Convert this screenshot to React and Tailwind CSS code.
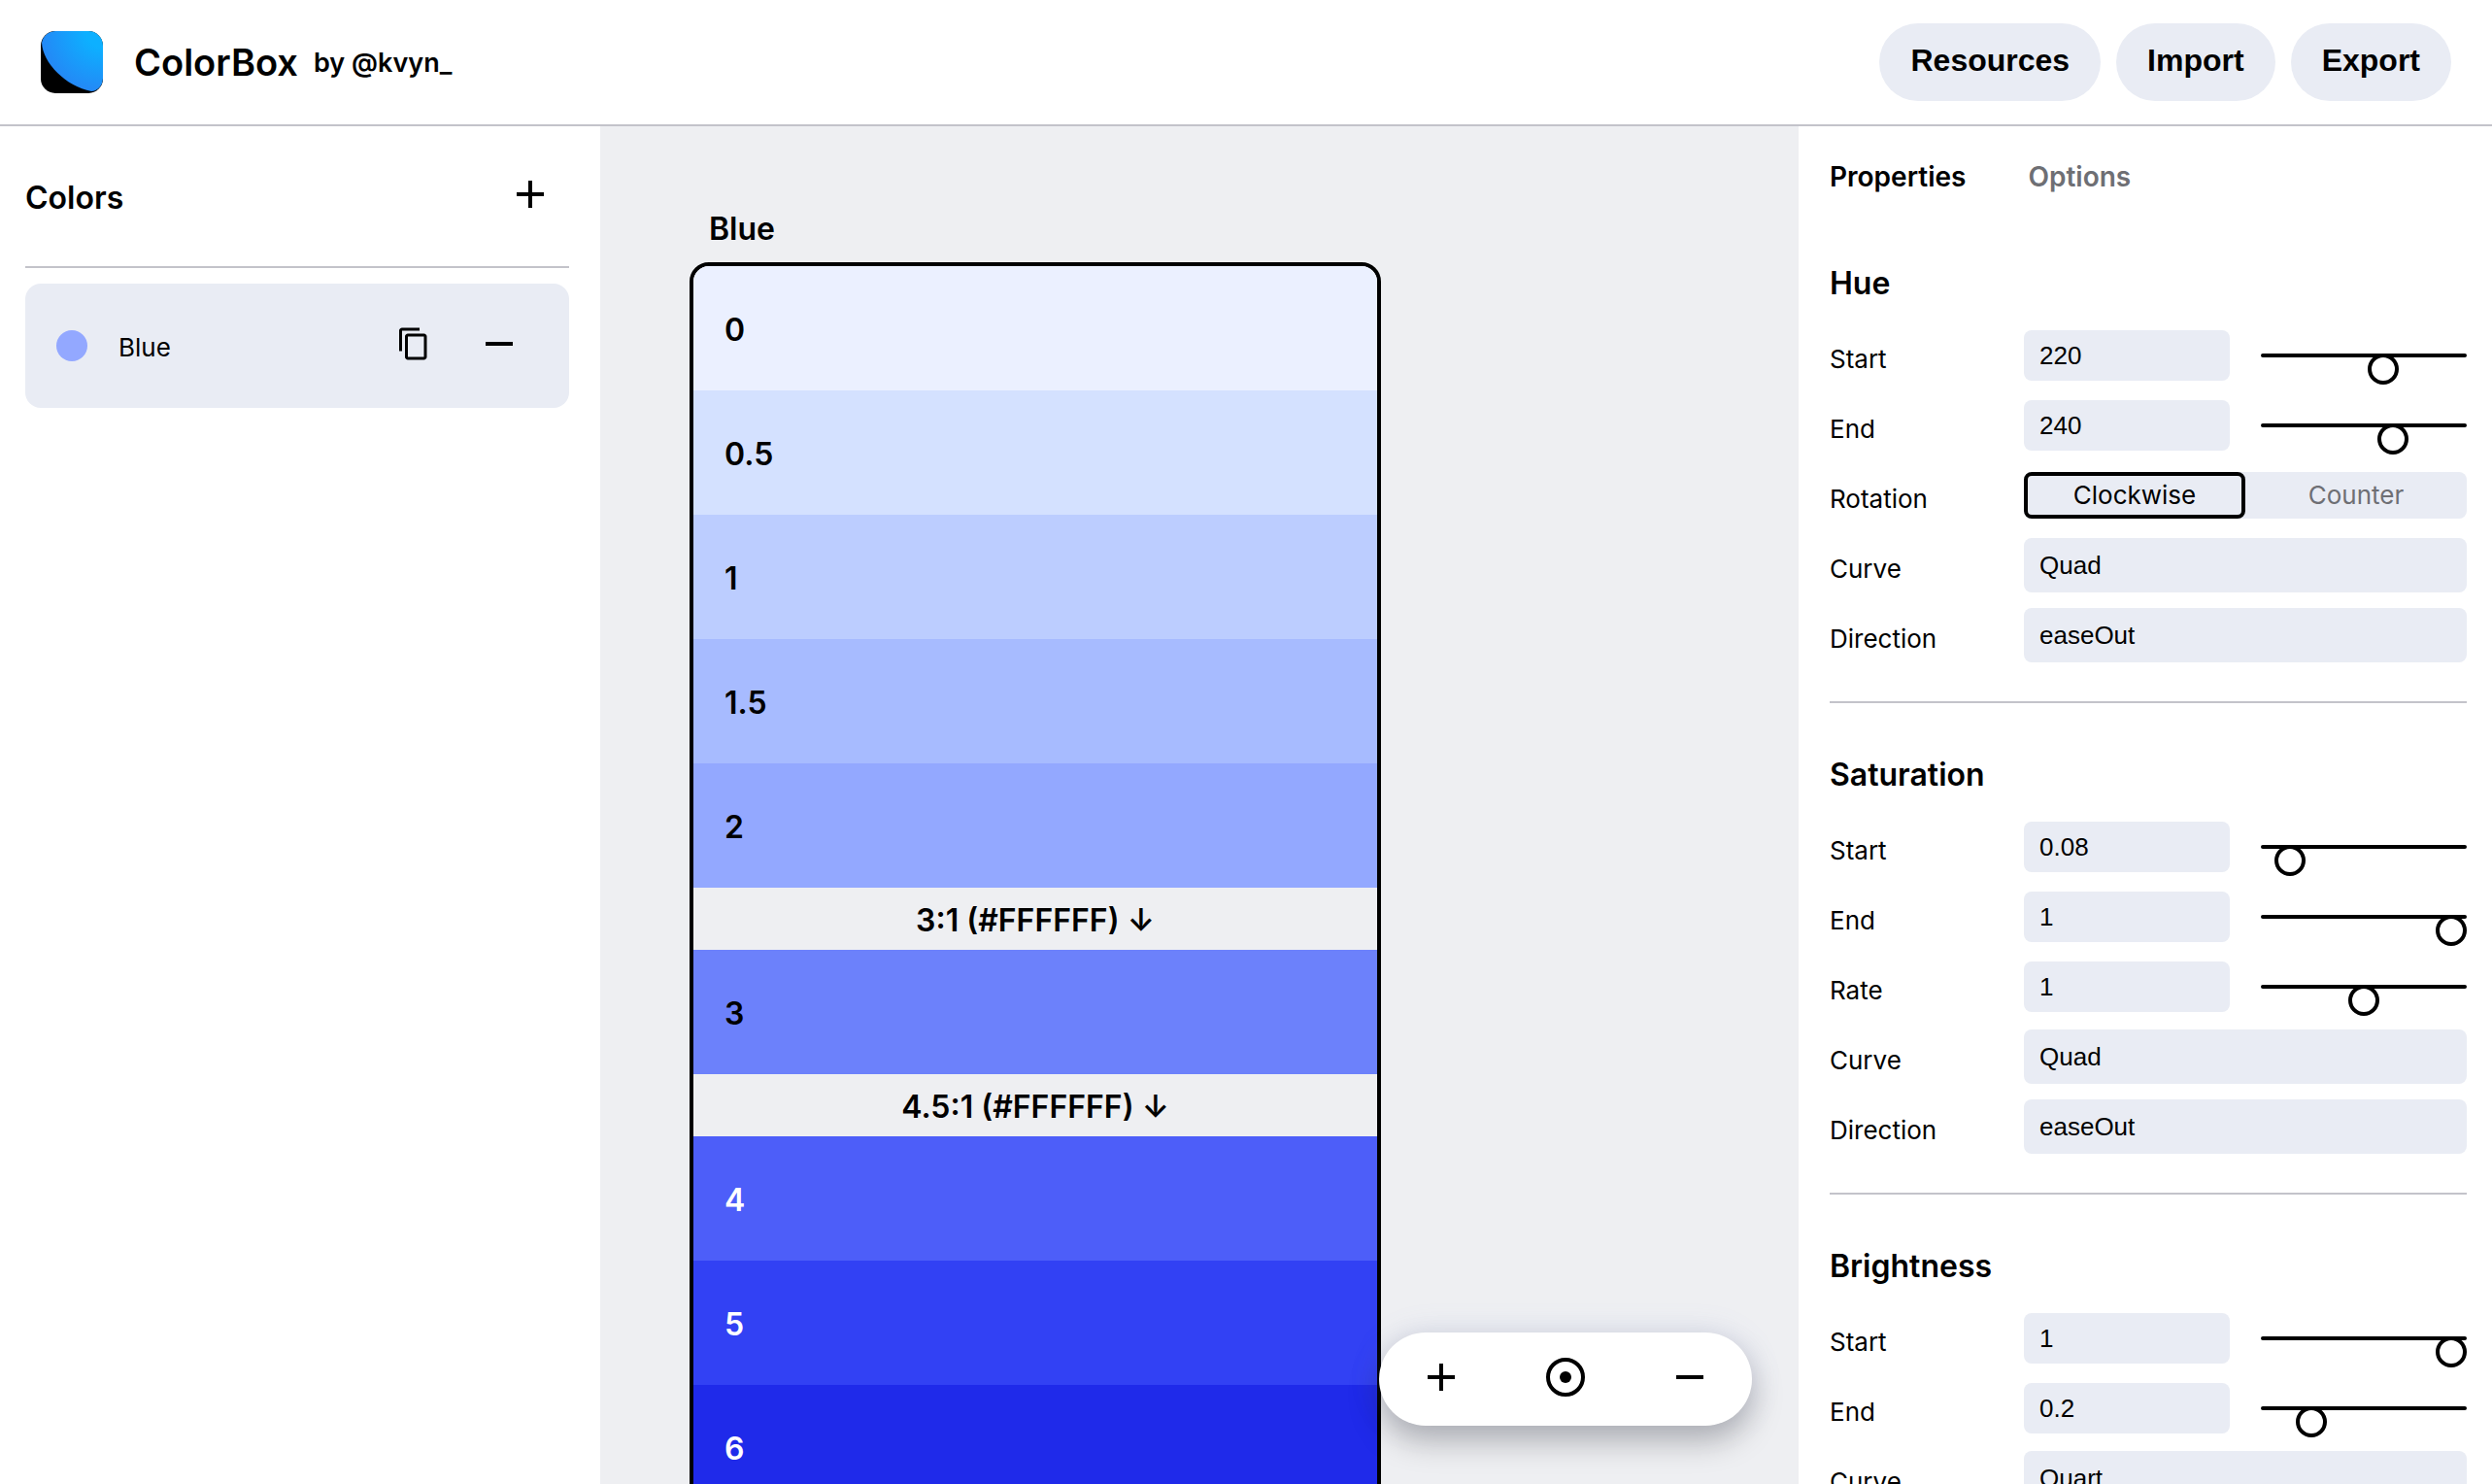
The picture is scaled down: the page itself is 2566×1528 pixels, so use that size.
import { MdAdd, MdRemove, MdContentCopy } from "react-icons/md";
import { useState } from "react";

const UI = "font-['Inter','Noto_Sans',sans-serif]";
const CONTROL = "font-['Liberation_Sans',Arial,sans-serif]";

const swatches = [
  { name: "0", bg: "bg-[#ebf0ff]" },
  { name: "0.5", bg: "bg-[#d4e1ff]" },
  { name: "1", bg: "bg-[#bccdff]" },
  { name: "1.5", bg: "bg-[#a7bbff]" },
  { name: "2", bg: "bg-[#93a8ff]" },
  { contrast: "3:1 (#FFFFFF)" },
  { name: "3", bg: "bg-[#6c81fb]" },
  { contrast: "4.5:1 (#FFFFFF)" },
  { name: "4", bg: "bg-[#4d5ef9]", light: true },
  { name: "5", bg: "bg-[#3241f4]", light: true },
  { name: "6", bg: "bg-[#1f2aea]", light: true },
  { name: "7", bg: "bg-[#141dcd]", light: true },
];

const curves = ["Quad", "Cubic", "Quart", "Quint", "Sine", "Expo"];
const directions = ["easeIn", "easeOut", "easeInOut"];

const sections = [
  {
    title: "Hue",
    rows: [
      { kind: "range", label: "Start", value: 220, max: 360, step: 1 },
      { kind: "range", label: "End", value: 240, max: 360, step: 1 },
      { kind: "rotation", label: "Rotation" },
      { kind: "select", label: "Curve", value: "Quad", options: curves },
      { kind: "select", label: "Direction", value: "easeOut", options: directions },
    ],
  },
  {
    title: "Saturation",
    rows: [
      { kind: "range", label: "Start", value: 0.08, max: 1, step: 0.01 },
      { kind: "range", label: "End", value: 1, max: 1, step: 0.01 },
      { kind: "range", label: "Rate", value: 1, max: 2, step: 0.01 },
      { kind: "select", label: "Curve", value: "Quad", options: curves },
      { kind: "select", label: "Direction", value: "easeOut", options: directions },
    ],
  },
  {
    title: "Brightness",
    rows: [
      { kind: "range", label: "Start", value: 1, max: 1, step: 0.01 },
      { kind: "range", label: "End", value: 0.2, max: 1, step: 0.01 },
      { kind: "select", label: "Curve", value: "Quart", options: curves },
      { kind: "select", label: "Direction", value: "easeOut", options: directions },
    ],
  },
];

function Logo() {
  return (
    <svg viewBox="0 0 64 64" className="size-16 shrink-0" aria-hidden="true">
      <defs>
        <radialGradient id="logo-blue" cx="1" cy="0" r="1.1">
          <stop offset="0.25" stopColor="#0db0ff" />
          <stop offset="1" stopColor="#2684f5" />
        </radialGradient>
        <clipPath id="logo-clip">
          <rect width="64" height="64" rx="15" />
        </clipPath>
      </defs>
      <g clipPath="url(#logo-clip)">
        <rect width="64" height="64" fill="#000" />
        <path
          d="M15 0H64V49C64 56 58 62 52 62C26 57 2 33 1 12C2 5 8 0 15 0Z"
          fill="url(#logo-blue)"
        />
      </g>
    </svg>
  );
}

function Header() {
  const pill =
    "h-20 rounded-full bg-[#e9ecf4] px-8 pb-1 text-[32px] leading-none font-bold " + CONTROL;
  return (
    <header className="flex h-[130px] shrink-0 items-center justify-between border-b-2 border-[#c3c3ca] px-[42px]">
      <div className="flex items-center">
        <Logo />
        <h1 className="ml-8 text-[38px] leading-none font-semibold">ColorBox</h1>
        <a href="#kvyn" className="ml-4 text-[27px] leading-none font-semibold">
          by @kvyn_
        </a>
      </div>
      <nav className="flex gap-4">
        <button className={pill}>Resources</button>
        <button className={pill}>Import</button>
        <button className={pill}>Export</button>
      </nav>
    </header>
  );
}

function ColorList() {
  return (
    <aside className="w-[618px] shrink-0 pr-8 pl-[26px]">
      <div className="flex h-[146px] items-center justify-between border-b-2 border-[#c3c3ca] pr-4">
        <h2 className="pt-1 text-[32px] leading-10 font-semibold">Colors</h2>
        <button aria-label="Add color" className="pb-1">
          <MdAdd className="size-12" />
        </button>
      </div>
      <div className="mt-4 flex h-32 items-center rounded-2xl bg-[#e9ecf4] pr-12 pl-8">
        <span className="size-8 rounded-full bg-[#93a8ff]" />
        <span className="ml-8 flex-1 pt-1 text-[26px] leading-8">Blue</span>
        <button aria-label="Duplicate Blue" className="pb-1">
          <MdContentCopy className="size-9" />
        </button>
        <button aria-label="Remove Blue" className="ml-[46px] pb-1">
          <MdRemove className="size-12" />
        </button>
      </div>
    </aside>
  );
}

function Canvas() {
  return (
    <main className="relative flex-1 overflow-hidden bg-[#eeeff2] pt-[86px] pl-[92px]">
      <h2 className="pl-5 text-[32px] leading-10 font-semibold">Blue</h2>
      <div className="mt-[14px] w-[712px] overflow-hidden rounded-[20px] border-4 border-black text-[32px] leading-10 font-semibold">
        {swatches.map((s) =>
          s.contrast ? (
            <div key={s.contrast} className="flex h-16 items-center justify-center bg-[#eeeff2] pt-1">
              {s.contrast} ↓
            </div>
          ) : (
            <div
              key={s.name}
              className={`flex h-32 items-center px-8 pt-1 ${s.bg} ${s.light ? "text-white" : "text-black"}`}
            >
              {s.name}
            </div>
          )
        )}
      </div>
      <div className="absolute right-12 bottom-[60px] grid h-24 w-96 grid-cols-3 rounded-full bg-white shadow-[0_16px_32px_rgba(0,0,0,0.25),0_0_32px_rgba(120,140,220,0.15)]">
        <button aria-label="Zoom in" className="flex items-center justify-center pb-1">
          <MdAdd className="size-12" />
        </button>
        <button aria-label="Reset view" className="flex items-center justify-center pb-1">
          <svg viewBox="0 0 48 48" className="size-12" aria-hidden="true">
            <circle cx="24" cy="24" r="18" fill="none" stroke="currentColor" strokeWidth="4" />
            <circle cx="24" cy="24" r="6" fill="currentColor" />
          </svg>
        </button>
        <button aria-label="Zoom out" className="flex items-center justify-center pb-1">
          <MdRemove className="size-12" />
        </button>
      </div>
    </main>
  );
}

function RangeControl({ id, row }) {
  const [value, setValue] = useState(row.value);
  const change = (e) => setValue(e.target.value);
  return (
    <div className="grid flex-1 grid-cols-2 items-center gap-8">
      <input
        id={id}
        type="text"
        value={value}
        onChange={change}
        className={`h-[52px] w-full min-w-0 rounded-lg bg-[#e9ecf4] px-4 text-[26px] leading-8 ${CONTROL}`}
      />
      <input
        type="range"
        aria-label={`${id} slider`}
        min="0"
        max={row.max}
        step={row.step}
        value={value}
        onChange={change}
        className="h-1 w-full min-w-0 appearance-none rounded-full bg-black [&::-webkit-slider-runnable-track]:h-1 [&::-webkit-slider-thumb]:size-8 [&::-webkit-slider-thumb]:appearance-none [&::-webkit-slider-thumb]:rounded-full [&::-webkit-slider-thumb]:border-4 [&::-webkit-slider-thumb]:border-black [&::-webkit-slider-thumb]:bg-white"
      />
    </div>
  );
}

function RotationControl({ id }) {
  return (
    <div id={id} className="grid h-12 flex-1 grid-cols-2 rounded-lg bg-[#e9ecf4] text-[26px] leading-8">
      <button className="rounded-lg border-4 border-black">Clockwise</button>
      <button className="rounded-lg text-[#6e6f74]">Counter</button>
    </div>
  );
}

function SelectControl({ id, row }) {
  return (
    <select
      id={id}
      defaultValue={row.value}
      className={`h-14 min-w-0 flex-1 appearance-none rounded-lg bg-[#e9ecf4] px-4 text-[26px] leading-8 ${CONTROL}`}
    >
      {row.options.map((o) => (
        <option key={o}>{o}</option>
      ))}
    </select>
  );
}

function Row({ section, row }) {
  const id = `${section}-${row.label}`.toLowerCase();
  return (
    <div className="flex h-14 items-center">
      <label htmlFor={id} className="w-[200px] shrink-0 pt-2 text-[26px] leading-8">
        {row.label}
      </label>
      {row.kind === "range" && <RangeControl id={id} row={row} />}
      {row.kind === "rotation" && <RotationControl id={id} />}
      {row.kind === "select" && <SelectControl id={id} row={row} />}
    </div>
  );
}

function Properties() {
  return (
    <aside className="w-[714px] shrink-0 overflow-hidden pt-9 pr-[26px] pl-8">
      <div className="flex gap-16 text-[28px] leading-8 font-semibold">
        <button>Properties</button>
        <button className="text-[#6e6f74]">Options</button>
      </div>
      <div className="mt-5 divide-y-2 divide-[#c3c3ca]">
        {sections.map((s) => (
          <section key={s.title} className="flex flex-col gap-4 pt-[54px] pb-10">
            <h2 className="mb-[10px] text-[32px] leading-10 font-semibold">{s.title}</h2>
            {s.rows.map((r) => (
              <Row key={r.label} section={s.title} row={r} />
            ))}
          </section>
        ))}
      </div>
    </aside>
  );
}

export default function App() {
  return (
    <div className={`flex h-screen flex-col overflow-hidden bg-white text-black ${UI}`}>
      <Header />
      <div className="flex min-h-0 flex-1">
        <ColorList />
        <Canvas />
        <Properties />
      </div>
    </div>
  );
}
